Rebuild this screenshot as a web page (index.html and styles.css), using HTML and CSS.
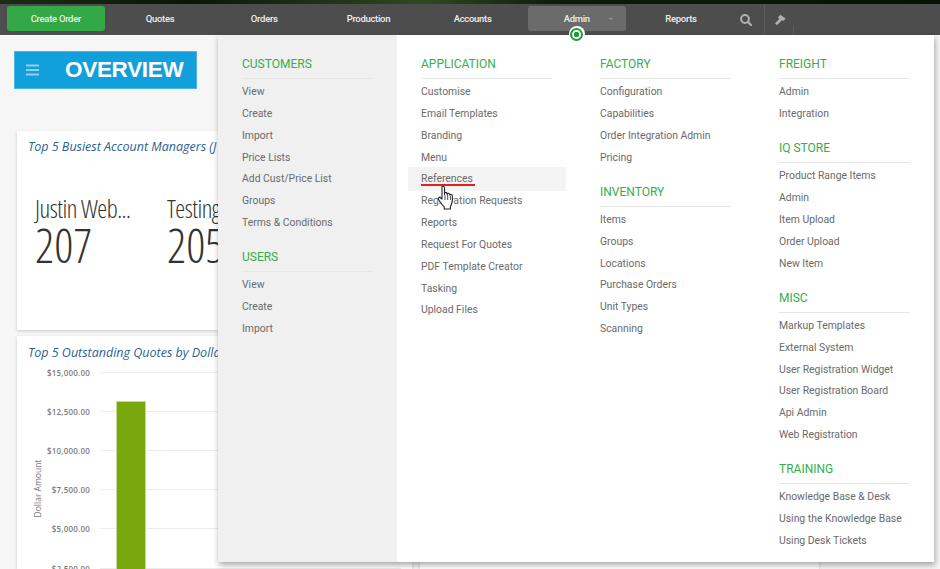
FILE: index.html
```html
<!DOCTYPE html>
<html lang="en">
<head>
<meta charset="utf-8">
<title>Admin menu</title>
<link rel="stylesheet" href="styles.css">
</head>
<body>
<div class="strip"></div>
<nav class="nav">
  <a class="nav-item create">Create Order</a>
  <a class="nav-item">Quotes</a>
  <a class="nav-item">Orders</a>
  <a class="nav-item">Production</a>
  <a class="nav-item">Accounts</a>
  <a class="nav-item active">Admin<span class="caret"></span>
    <span class="pointer"><span class="pointer-dot"></span></span>
  </a>
  <a class="nav-item">Reports</a>
  <span class="nav-icon search">
    <svg width="12" height="12" viewBox="0 0 12 12"><circle cx="5" cy="5" r="3.9" fill="none" stroke="#b0b0b0" stroke-width="2"/><path d="M8 8 11 11" stroke="#b0b0b0" stroke-width="2.200" stroke-linecap="round"/></svg>
  </span>
  <span class="nav-icon tool">
    <svg width="12" height="12" viewBox="0 0 12 12"><path d="M1 9.200 5.400 4.900 3.900 3.400 6.300.8 11.600 4.600 9.600 6.800 7.800 6.200 3 11.200Z" fill="#b0b0b0"/></svg>
  </span>
</nav>

<main class="page">
  <div class="overview">
    <svg class="burger" width="14" height="12" viewBox="0 0 14 12"><path d="M0 1.500h13M0 6h13M0 10.500h13" stroke="#8fd0f0" stroke-width="2"/></svg>
    <span class="overview-text">OVERVIEW</span>
  </div>
  <section class="card card-stats">
    <h2 class="card-title">Top 5 Busiest Account Managers (J</h2>
    <div class="stats">
      <div class="stat"><div class="stat-name">Justin Web...</div><div class="stat-num">207</div></div>
      <div class="stat"><div class="stat-name">Testing</div><div class="stat-num">205</div></div>
    </div>
  </section>
  <div class="lower">
    <section class="card card-chart">
      <h2 class="card-title">Top 5 Outstanding Quotes by Dollar</h2>
      <div class="chart">
        <div class="axis-title">Dollar Amount</div>
        <div class="rows">
          <div class="row"><span class="tick">$15,000.00</span><span class="grid-line"></span></div>
          <div class="row"><span class="tick">$12,500.00</span><span class="grid-line"></span></div>
          <div class="row"><span class="tick">$10,000.00</span><span class="grid-line"></span></div>
          <div class="row"><span class="tick">$7,500.00</span><span class="grid-line"></span></div>
          <div class="row"><span class="tick">$5,000.00</span><span class="grid-line"></span></div>
          <div class="row"><span class="tick">$2,500.00</span><span class="grid-line"></span></div>
        </div>
        <div class="bar"></div>
      </div>
    </section>
    <section class="card card-third"></section>
  </div>
</main>

<div class="menu">
  <div class="menu-col side">
    <div class="group">
      <h3 class="group-title">CUSTOMERS</h3>
      <a class="link">View</a><a class="link">Create</a><a class="link">Import</a><a class="link">Price Lists</a><a class="link">Add Cust/Price List</a><a class="link">Groups</a><a class="link">Terms &amp; Conditions</a>
    </div>
    <div class="group">
      <h3 class="group-title">USERS</h3>
      <a class="link">View</a><a class="link">Create</a><a class="link">Import</a>
    </div>
  </div>
  <div class="menu-col">
    <div class="group">
      <h3 class="group-title">APPLICATION</h3>
      <a class="link">Customise</a><a class="link">Email Templates</a><a class="link">Branding</a><a class="link">Menu</a>
      <a class="link hover">References
        <svg class="cursor" width="20" height="25" viewBox="0 0 20 25"><path d="M5 1.500c1-.9 2.300-.4 2.500 1v7l.2-1.400c.5-1 2-1 2.300.2l.2 1.400.2-.8c.5-1 1.900-.8 2.200.3l.2 1 .3-.4c.6-.7 2-.4 2.200.7.3 2.600.2 5.300-.4 7.300-.4 1.500-.9 2.600-1.500 3.600v2.600H7.200v-2.300C5.500 20.600 3.500 17.500 1.500 14.500c-.8-1.200.5-2.600 1.800-1.800L5 14V2.500Z" fill="#fff" stroke="#222" stroke-width="1.100" stroke-linejoin="round"/><path d="M8 10v5M10.700 10v5M13.400 11v4" stroke="#222" stroke-width=".8"/></svg>
      </a>
      <a class="link">Registration Requests</a><a class="link">Reports</a><a class="link">Request For Quotes</a><a class="link">PDF Template Creator</a><a class="link">Tasking</a><a class="link">Upload Files</a>
    </div>
  </div>
  <div class="menu-col">
    <div class="group">
      <h3 class="group-title">FACTORY</h3>
      <a class="link">Configuration</a><a class="link">Capabilities</a><a class="link">Order Integration Admin</a><a class="link">Pricing</a>
    </div>
    <div class="group">
      <h3 class="group-title">INVENTORY</h3>
      <a class="link">Items</a><a class="link">Groups</a><a class="link">Locations</a><a class="link">Purchase Orders</a><a class="link">Unit Types</a><a class="link">Scanning</a>
    </div>
  </div>
  <div class="menu-col">
    <div class="group">
      <h3 class="group-title">FREIGHT</h3>
      <a class="link">Admin</a><a class="link">Integration</a>
    </div>
    <div class="group">
      <h3 class="group-title">IQ STORE</h3>
      <a class="link">Product Range Items</a><a class="link">Admin</a><a class="link">Item Upload</a><a class="link">Order Upload</a><a class="link">New Item</a>
    </div>
    <div class="group">
      <h3 class="group-title">MISC</h3>
      <a class="link">Markup Templates</a><a class="link">External System</a><a class="link">User Registration Widget</a><a class="link">User Registration Board</a><a class="link">Api Admin</a><a class="link">Web Registration</a>
    </div>
    <div class="group">
      <h3 class="group-title">TRAINING</h3>
      <a class="link">Knowledge Base &amp; Desk</a><a class="link">Using the Knowledge Base</a><a class="link">Using Desk Tickets</a>
    </div>
  </div>
</div>
</body>
</html>
```
FILE: styles.css
```css
* { box-sizing: border-box; }
html, body { margin: 0; height: 100%; }
body {
  width: 940px;
  height: 569px;
  overflow: hidden;
  position: relative;
  background: #f6f6f6;
  font-family: Roboto, sans-serif;
}
.strip {
  height: 4px;
  background: linear-gradient(90deg, #1c2c18 0%, #0c1408 20%, #2c4a20 45%, #0c1a08 60%, #0a1a04 80%, #081006 100%);
}
.nav {
  height: 31px;
  background: #4d4d4d;
  display: flex;
  align-items: center;
  padding: 0 0 2px 7px;
  gap: 6.5px;
}
.nav-item {
  width: 97.7px;
  height: 25px;
  display: flex;
  align-items: center;
  justify-content: center;
  position: relative;
  color: #ededed;
  font-size: 9.5px;
  letter-spacing: -.3px;
  font-weight: 500;
  border-radius: 3px;
}
.create { background: #33a846; }
.active { background: #6b6b6b; }
.caret {
  position: absolute;
  left: 81px;
  top: 12px;
  border: 2px solid transparent;
  border-top: 2px solid #9a9a9a;
  border-bottom: 0;
}
.pointer {
  position: absolute;
  left: 41px;
  top: 20px;
  width: 16px;
  height: 16px;
  border-radius: 50%;
  background: #fff;
  display: flex;
  align-items: center;
  justify-content: center;
  z-index: 3;
}
.pointer-dot {
  width: 13px;
  height: 13px;
  border-radius: 50%;
  border: 2px solid #1f9a3a;
  background: radial-gradient(circle, #1f9a3a 0 2.5px, #fff 3px);
}
.nav-icon {
  display: flex;
  height: 31px;
  align-items: center;
  justify-content: center;
  position: relative;
  top: 1px;
}
.search { width: 20px; }
.tool { width: 30px; margin-left: 1.5px; border-left: 1px solid #5c5c5c; }
.tool::after {
  content: "";
  position: absolute;
  right: 0;
  bottom: 0;
  width: 1px;
  height: 10px;
  background: #5c5c5c;
}

.page { padding: 16px 0 0 14px; }
.overview {
  width: 183px;
  height: 38px;
  background: #12a0dc;
  border: 1px solid #4fb6e4;
  display: flex;
  align-items: center;
  padding-left: 11px;
  gap: 25px;
}
.overview-text {
  color: #fff;
  font-family: "Liberation Sans", sans-serif;
  font-weight: 700;
  font-size: 22.5px;
  letter-spacing: -.3px;
}
.card {
  background: #fff;
  box-shadow: 0 1px 3px rgba(0,0,0,.18);
}
.card-title {
  margin: 0;
  font-family: "Open Sans", sans-serif;
  font-style: italic;
  font-weight: 400;
  font-size: 12.5px;
  line-height: 18px;
  color: #2a5f96;
  white-space: nowrap;
}
.card-stats {
  margin: 42px 0 0 3px;
  width: 400px;
  height: 199px;
  padding: 7px 11px;
}
.stats { display: flex; margin: 36px 0 0 7px; }
.stat { width: 132px; }
.stat-name {
  font-family: "Open Sans", sans-serif;
  font-weight: 300;
  font-stretch: 75%;
  font-size: 25px;
  letter-spacing: -.5px;
  line-height: 32px;
  color: #333;
}
.stat-num {
  font-family: "Open Sans", sans-serif;
  font-weight: 300;
  font-stretch: 75%;
  font-size: 47px;
  line-height: 42px;
  color: #333;
}
.lower { display: flex; gap: 8px; margin: 6px 0 0 3px; height: 300px; }
.card-chart {
  width: 395px;
  height: 233px;
  padding: 8px 11px;
}
.card-third { width: 399px; height: 233px; }
.chart { position: relative; margin-top: -9px; }
.row { display: flex; align-items: center; height: 39.100px; margin-left: 12px; }
.tick {
  width: 50px;
  text-align: right;
  font-family: "Open Sans", sans-serif;
  font-size: 8px;
  letter-spacing: .2px;
  font-weight: 600;
  color: #7c7c7c;
  white-space: nowrap;
}
.grid-line { flex: 1; height: 1px; background: #ececec; margin-left: 10px; }
.axis-title {
  position: absolute;
  left: -21px;
  top: 130px;
  width: 60px;
  font-family: "Open Sans", sans-serif;
  font-size: 8.5px;
  color: #777;
  text-align: center;
  transform: rotate(-90deg);
  white-space: nowrap;
}
.bar {
  position: absolute;
  left: 89px;
  top: 49px;
  width: 28px;
  height: 200px;
  background: #78a80e;
  box-shadow: 0 0 0 1px #c4dc94;
}

.menu {
  position: absolute;
  left: 218px;
  top: 35px;
  width: 716px;
  height: 527px;
  background: #fff;
  display: flex;
  box-shadow: 1px 3px 6px rgba(0,0,0,.35);
  z-index: 2;
}
.menu-col { width: 179px; padding: 20px 24px 0; }
.side { background: #f0f0f0; }
.group { margin-bottom: 14.500px; }
.group-title {
  margin: 0 0 2px;
  height: 24px;
  line-height: 18px;
  font-size: 12px;
  font-weight: 400;
  color: #36ad4c;
  border-bottom: 1px solid #e6e6e6;
}
.link {
  display: block;
  height: 21.850px;
  line-height: 21.850px;
  font-size: 10.4px;
  color: #6a6a6a;
  white-space: nowrap;
  position: relative;
}
.hover {
  background: #f4f4f4;
  box-shadow: 0 -1px #f4f4f4, 0 1px #f4f4f4;
  margin: 0 -14px 0 -13px;
  padding-left: 13px;
}
.hover::after {
  content: "";
  position: absolute;
  left: 13px;
  width: 54px;
  top: 16px;
  height: 2px;
  background: #e02020;
}
.cursor { position: absolute; left: 29px; top: 17px; z-index: 1; }
```
